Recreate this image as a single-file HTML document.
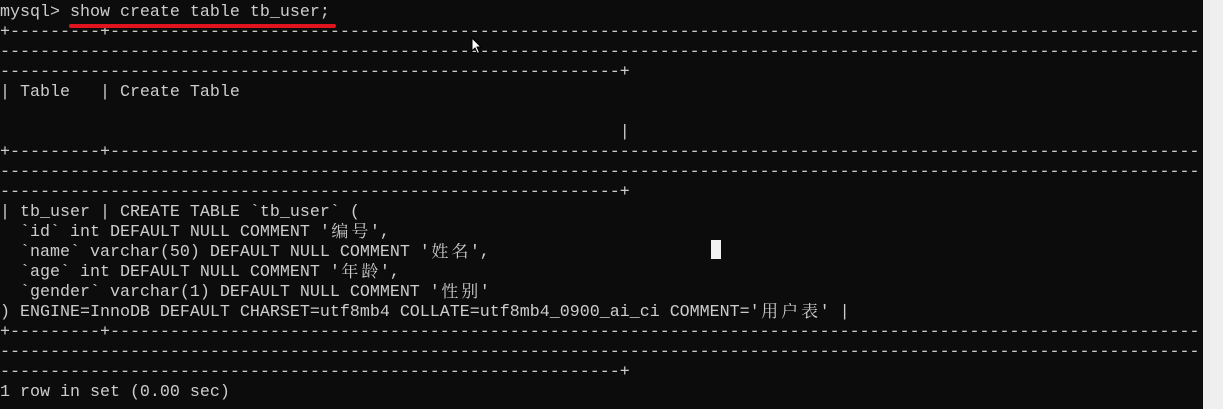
<!DOCTYPE html>
<html><head><meta charset="utf-8"><style>
html,body{margin:0;padding:0;background:#0c0c0c;width:1223px;height:409px;overflow:hidden;position:relative}
#t{position:absolute;left:0;top:3px;width:1200px;overflow:hidden;font-family:"Liberation Mono",monospace;font-size:16.67px;color:#cccccc}
#t div{height:20px;line-height:20px;white-space:pre;overflow:hidden}
.c{display:inline-block;width:20px;height:20px;text-align:center;font-family:"Noto Serif CJK SC","Noto Sans CJK SC",serif;font-size:17px;line-height:20px;vertical-align:top;position:relative;top:-3px}
#sb{position:absolute;left:1203px;top:0;width:20px;height:409px;background:#efefef}
#ul{position:absolute;left:69px;top:24px;width:267px;height:4px;background:#e0141e;border-radius:2px}
#cur{position:absolute;left:711px;top:240px;width:10px;height:19px;background:#f2f2f2}
</style></head><body>
<div id="t">
<div>mysql&gt; show create table tb_user;</div>
<div>+---------+---------------------------------------------------------------------------------------------------------------</div>
<div>------------------------------------------------------------------------------------------------------------------------</div>
<div>--------------------------------------------------------------+</div>
<div>| Table   | Create Table</div>
<div> </div>
<div>                                                              |</div>
<div>+---------+---------------------------------------------------------------------------------------------------------------</div>
<div>------------------------------------------------------------------------------------------------------------------------</div>
<div>--------------------------------------------------------------+</div>
<div>| tb_user | CREATE TABLE `tb_user` (</div>
<div>  `id` int DEFAULT NULL COMMENT '<span class="c">编</span><span class="c">号</span>',</div>
<div>  `name` varchar(50) DEFAULT NULL COMMENT '<span class="c">姓</span><span class="c">名</span>',</div>
<div>  `age` int DEFAULT NULL COMMENT '<span class="c">年</span><span class="c">龄</span>',</div>
<div>  `gender` varchar(1) DEFAULT NULL COMMENT '<span class="c">性</span><span class="c">别</span>'</div>
<div>) ENGINE=InnoDB DEFAULT CHARSET=utf8mb4 COLLATE=utf8mb4_0900_ai_ci COMMENT='<span class="c">用</span><span class="c">户</span><span class="c">表</span>' |</div>
<div>+---------+---------------------------------------------------------------------------------------------------------------</div>
<div>------------------------------------------------------------------------------------------------------------------------</div>
<div>--------------------------------------------------------------+</div>
<div>1 row in set (0.00 sec)</div>
</div>
<div id="ul"></div>
<div id="cur"></div>
<div id="sb"></div>
<svg style="position:absolute;left:471px;top:37px" width="12" height="18" viewBox="0 0 12 18"><path d="M1 1 L1 14 L4 11 L6.5 16.5 L8.5 15.5 L6 10 L10 10 Z" fill="#fff" stroke="#000" stroke-width="1"/></svg>
</body></html>
